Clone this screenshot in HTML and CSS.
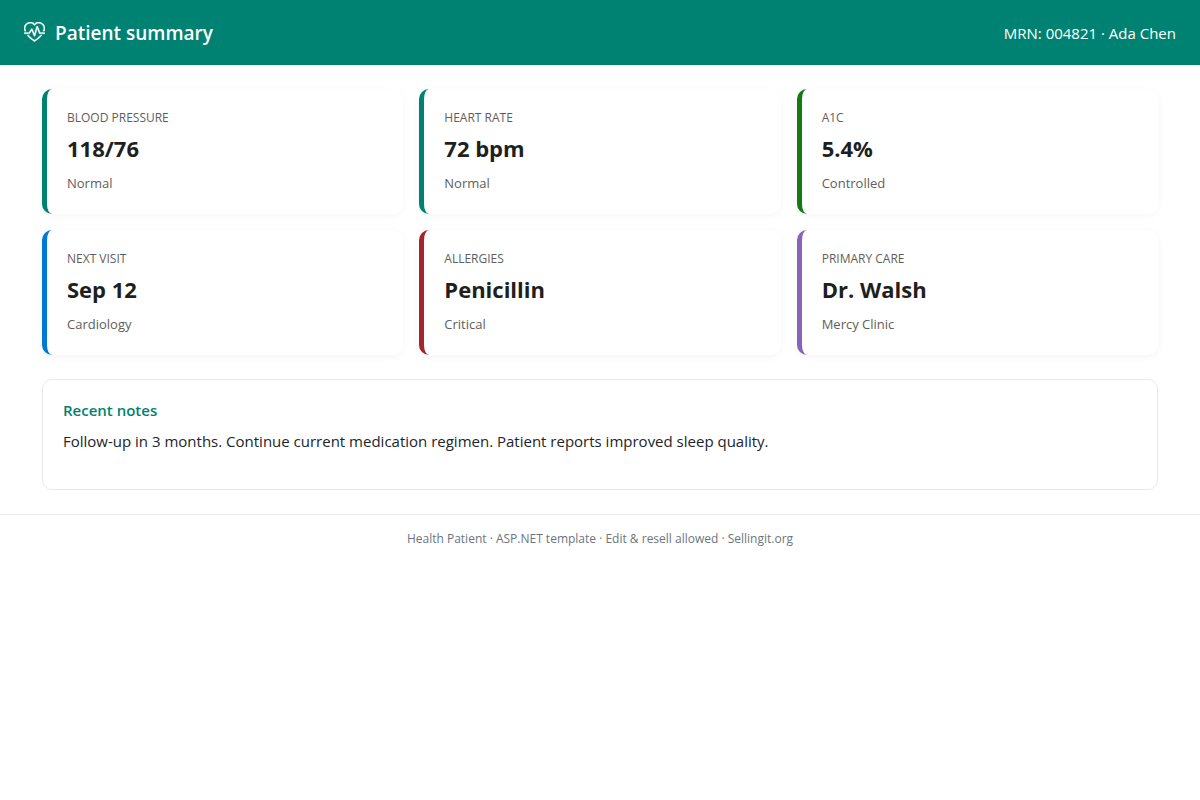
FILE: index.html
```html
<!doctype html>
<html lang="en">
<head>
	<meta charset="utf-8">
	<meta name="viewport" content="width=device-width, initial-scale=1">
	<title>Patient summary</title>
	<link rel="stylesheet" href="styles.css">
</head>
<body>
<header class="topbar">
	<h1 class="brand">
		<svg class="brand-icon" viewBox="0 0 16 16" fill="currentColor" aria-hidden="true">
			<path d="m8 2.748-.717-.737C5.6.281 2.514.878 1.4 3.053.918 3.995.78 5.323 1.508 7H.43c-2.128-5.697 4.165-8.83 7.394-5.857q.09.083.176.171a3 3 0 0 1 .176-.17c3.23-2.974 9.522.159 7.394 5.856h-1.078c.728-1.677.59-3.005.108-3.947C13.486.878 10.4.28 8.717 2.01zM2.212 10h1.315C4.593 11.183 6.05 12.458 8 13.795c1.949-1.337 3.407-2.612 4.473-3.795h1.315c-1.265 1.566-3.14 3.25-5.788 5-2.648-1.75-4.523-3.434-5.788-5"/>
			<path d="M10.464 3.314a.5.5 0 0 0-.945.049L7.921 8.956 6.464 5.314a.5.5 0 0 0-.88-.091L3.732 8H.5a.5.5 0 0 0 0 1H4a.5.5 0 0 0 .416-.223l1.473-2.209 1.647 4.118a.5.5 0 0 0 .945-.049l1.598-5.593 1.457 3.642A.5.5 0 0 0 12 9h3.5a.5.5 0 0 0 0-1h-3.162z"/>
		</svg>
		<span>Patient summary</span>
	</h1>
	<div class="patient">MRN: 004821 · Ada Chen</div>
</header>
<main class="page">
	<section class="cards">
		<article class="card">
			<div class="label">Blood pressure</div>
			<div class="value">118/76</div>
			<div class="hint">Normal</div>
		</article>
		<article class="card">
			<div class="label">Heart rate</div>
			<div class="value">72 bpm</div>
			<div class="hint">Normal</div>
		</article>
		<article class="card green">
			<div class="label">A1C</div>
			<div class="value">5.4%</div>
			<div class="hint">Controlled</div>
		</article>
		<article class="card blue">
			<div class="label">Next visit</div>
			<div class="value">Sep 12</div>
			<div class="hint">Cardiology</div>
		</article>
		<article class="card red">
			<div class="label">Allergies</div>
			<div class="value">Penicillin</div>
			<div class="hint">Critical</div>
		</article>
		<article class="card purple">
			<div class="label">Primary care</div>
			<div class="value">Dr. Walsh</div>
			<div class="hint">Mercy Clinic</div>
		</article>
	</section>
	<section class="notes">
		<h2>Recent notes</h2>
		<p>Follow-up in 3 months. Continue current medication regimen. Patient reports improved sleep quality.</p>
	</section>
</main>
<footer class="footer">Health Patient · ASP.NET template · Edit &amp; resell allowed · Sellingit.org</footer>
</body>
</html>
```
FILE: styles.css
```css
*{box-sizing: border-box;}
body{
	margin: 0;
	font-family: "Segoe UI", "Open Sans", "Noto Sans", sans-serif;
	font-size: 15px;line-height: 24px;
	color: #212529;background: #fff;
}
.topbar{
	display: flex;justify-content: space-between;align-items: center;
	padding: 16px 24px;min-height: 65px;
	background: #008272;color: #fff;
}
.brand{
	display: flex;align-items: center;gap: 10px;
	margin: 0;font-size: 19px;font-weight: 600;
}
.brand-icon{
	width: 21px;height: 21px;
	stroke: currentColor;stroke-width: 0.25;
}
.page{
	max-width: 1164px;margin: 0 auto;padding: 24px;
}
.cards{
	display: grid;grid-template-columns: repeat(auto-fit, minmax(280px, 1fr));
	gap: 16px;
}
.card{
	padding: 20px;
	background: #fff;border-left: 5px solid #008272;border-radius: 10px;
	box-shadow: 0 2px 8px rgba(0,0,0,0.04);
}
.card.green{border-color: #107c10;}
.card.blue{border-color: #0078d4;}
.card.red{border-color: #a4262c;}
.card.purple{border-color: #8764b8;}
.label{
	font-size: 12px;line-height: 18px;
	text-transform: uppercase;color: #605e5c;
}
.value{
	margin: 4px 0;
	font-size: 22px;line-height: 34px;font-weight: 700;color: #201f1e;
}
.hint{
	padding-top: 4px;
	font-size: 13px;line-height: 21px;color: #605e5c;
}
.notes{
	margin-top: 24px;padding: 20px;
	border: 1px solid #e8e8e8;border-radius: 10px;
}
.notes h2{
	margin: 0 0 8px;
	font-size: 15px;line-height: 21px;font-weight: 600;color: #008272;
}
.notes p{margin: 0 0 16px;}
.footer{
	padding: 12px 16px;
	border-top: 1px solid #ebebeb;
	font-size: 12px;text-align: center;color: #6c757d;
}
```
